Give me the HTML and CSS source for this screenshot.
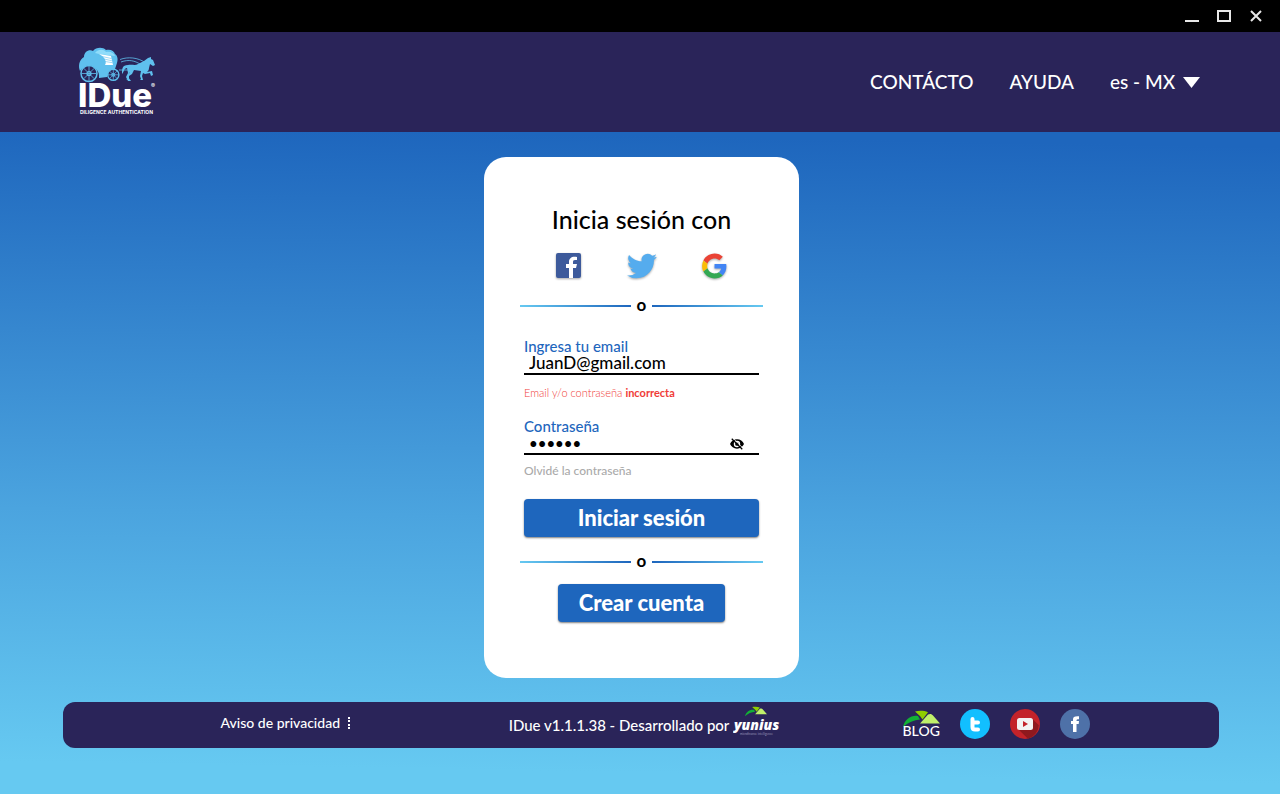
FILE: index.html
```html
<!DOCTYPE html>
<html lang="es-MX">
<head>
<meta charset="utf-8">
<meta name="viewport" content="width=device-width, initial-scale=1">
<title>IDue - Inicia sesión</title>
<link rel="stylesheet" href="styles.css">
</head>
<body>
<svg class="sprite" aria-hidden="true">
  <symbol id="leaves" viewBox="0 0 37 18">
    <path fill="#12b035" d="M0 17C2 9 8 5 15 6l2 3.500C11 10 5 12.500 0 17z"/>
    <path fill="#8fce00" d="M12 1.500C16 .500 21 .500 25 2.200L19.500 9.500 17 6z"/>
    <path fill="#c0f06a" d="M17 13.500 25 4.500c2-1 4-.500 5 1l7 8z"/>
  </symbol>
</svg>

<div class="titlebar">
  <button class="win" aria-label="Minimizar"><svg viewBox="0 0 16 16"><path d="M1 13h14"/></svg></button>
  <button class="win" aria-label="Maximizar"><svg viewBox="0 0 16 16"><path d="M2 3h12v10H2z"/></svg></button>
  <button class="win" aria-label="Cerrar"><svg viewBox="0 0 16 16"><path d="M3 3l10 10M13 3 3 13"/></svg></button>
</div>

<header class="header">
  <a class="logo" href="#" aria-label="IDue Diligence Authentication">
    <svg viewBox="0 0 80 70">
      <path fill="#5fc0ee" d="M2 24C0 19 1 13 6 10c0-5 5-8 9-6 3-4 10-4 13-1 5-1 8 1 9 4 3 2 3 6 2 9l-2 6c-4 0-7 3-8 8l-8 1c1-7-4-12-10-12-4 0-7 2-9 5z"/>
      <path fill="#8fdcfa" d="M17 6c3-4 9-4 11-1 4-1 8 1 9 4l-16-2z"/>
      <path fill="#fff" d="M21 7l12 2 2 9h-8c2-3 0-8-6-11z"/>
      <path fill="none" stroke="#5fc0ee" stroke-width=".6" d="M24 9.500l9.500 2M26 12l8 1.800M27 14.500l7.500 1.200"/>
      <g fill="none" stroke="#5fc0ee">
        <circle cx="11" cy="26.500" r="8" fill="#2a2459" stroke-width="1.500"/><circle cx="11" cy="26.500" r="2" stroke-width="1.200"/>
        <path stroke-width=".8" d="M11 19v15M3.500 26.500h15M5.700 21.200l10.600 10.600M16.300 21.200 5.700 31.800"/>
        <circle cx="35.300" cy="27.800" r="5.600" fill="#2a2459" stroke-width="1.400"/><circle cx="35.300" cy="27.800" r="1.500"/>
        <path stroke-width=".7" d="M35.300 22.500v11M30 27.800h11M31.500 24l7.600 7.600M39.100 24l-7.600 7.600"/>
        <path stroke-width=".8" d="M41 23h9M42 12.500c8-3 18-2 25 3M43 15c8-3 14-1 19 2"/>
      </g>
      <path fill="#5fc0ee" d="M66 14l4-3 3-1v2l2 1 2 5-2 1-3-2-1 4c0 2-1 3-2 4l5-1 1 4-2 1-1-3-5 1-2-1-1 3 1 4h-3l1-1-1-3 1-5-7-1-2 4-3 2v4h-3l2-1v-4l2-3-1 1-1 4 3 4h-3l-2-4 2-4-1-5c-3 0-3 4-5 6 0-5 0-9 6-9 4-1 7 1 10-1z"/>
      <text class="logo-name" x="0" y="60">IDue</text>
      <text class="logo-mark" x="73" y="41">®</text>
      <text class="logo-tag" x="2" y="67">DILIGENCE AUTHENTICATION</text>
    </svg>
  </a>
  <nav class="nav">
    <a href="#">CONTÁCTO</a>
    <a href="#">AYUDA</a>
    <div class="language">
      <select aria-label="Idioma"><option>es - MX</option></select>
      <svg viewBox="0 0 17 11" aria-hidden="true"><path d="M0 0h17L8.500 11z"/></svg>
    </div>
  </nav>
</header>

<main class="main">
  <form class="card">
    <h1 class="title">Inicia sesión con</h1>
    <div class="providers">
      <button type="button" aria-label="Facebook"><svg viewBox="0 0 30 30"><rect x="2" y="2" width="25" height="25" rx="2" fill="#3d5a9b"/><path fill="#fff" d="M15 27V17h-3v-4h3v-2c0-4 3-6 8-5v3c-3 0-4 0-4 2v2h4l-1 4h-3v10z"/></svg></button>
      <button type="button" aria-label="Twitter"><svg viewBox="0 0 24 24"><path fill="#55acee" d="M23.950 4.570a10 10 0 0 1-2.820.770 4.960 4.960 0 0 0 2.160-2.720c-.950.550-2 .950-3.130 1.180a4.920 4.920 0 0 0-8.380 4.480C7.690 8.090 4.070 6.130 1.640 3.160a4.920 4.920 0 0 0 1.520 6.570 4.900 4.900 0 0 1-2.230-.610v.060a4.920 4.920 0 0 0 3.950 4.830 5 5 0 0 1-2.210.080 4.940 4.940 0 0 0 4.600 3.420A9.870 9.870 0 0 1 0 19.540a14 14 0 0 0 7.550 2.210c9.050 0 14-7.500 14-13.980l-.020-.630a9.900 9.900 0 0 0 2.420-2.570z"/></svg></button>
      <button type="button" aria-label="Google"><svg viewBox="-6 -5 58 58"><path fill="#ea4335" d="M24 9.500c3.540 0 6.710 1.220 9.210 3.600l6.850-6.850C35.900 2.380 30.470 0 24 0 14.620 0 6.510 5.380 2.560 13.220l7.980 6.190C12.430 13.720 17.740 9.500 24 9.500z"/><path fill="#4285f4" d="M46.980 24.550c0-1.570-.150-3.090-.380-4.550H24v9.020h12.940c-.580 2.960-2.260 5.480-4.780 7.180l7.730 6c4.510-4.180 7.090-10.360 7.090-17.650z"/><path fill="#fbbc05" d="M10.530 28.590A14.500 14.500 0 0 1 9.770 24c0-1.600.270-3.140.760-4.590l-7.980-6.190A24 24 0 0 0 0 24c0 3.880.920 7.540 2.560 10.780z"/><path fill="#34a853" d="M24 48c6.480 0 11.930-2.130 15.890-5.810l-7.730-6c-2.150 1.450-4.920 2.300-8.160 2.300-6.260 0-11.570-4.220-13.470-9.910l-7.980 6.190C6.510 42.620 14.620 48 24 48z"/></svg></button>
    </div>

    <div class="divider"><span>o</span></div>

    <div class="field">
      <label for="email">Ingresa tu email</label>
      <div class="control"><input id="email" type="email" value="JuanD@gmail.com"></div>
      <p class="error">Email y/o contraseña <b>incorrecta</b></p>
    </div>
    <div class="field">
      <label for="password">Contraseña</label>
      <div class="control">
        <input id="password" type="password" value="abcdef">
        <button class="eye" type="button" aria-label="Mostrar contraseña"><svg viewBox="0 0 24 24"><path fill-rule="evenodd" d="M12 4C6.500 4 2 7.500 0 12c2 4.500 6.500 8 12 8s10-3.500 12-8c-2-4.500-6.500-8-12-8zm0 2.500a5.500 5.500 0 1 1 0 11 5.500 5.500 0 0 1 0-11z"/><circle cx="12" cy="12" r="3.200"/><path fill="none" stroke="#fff" stroke-width="1.500" d="M5 2l18 18"/><path fill="none" stroke="#000" stroke-width="2.200" d="M3 3l18 18"/></svg></button>
      </div>
      <a class="forgot" href="#">Olvidé la contraseña</a>
    </div>

    <button class="primary" type="submit">Iniciar sesión</button>
    <div class="divider"><span>o</span></div>
    <button class="primary secondary" type="button">Crear cuenta</button>
  </form>
</main>

<footer class="footer">
  <a class="privacy" href="#">Aviso de privacidad
    <svg viewBox="0 0 3 13" aria-hidden="true"><path d="M0 0h2v2H0zM0 3h2v2H0zM0 7h2v2H0zM0 10h2v2H0z"/></svg>
  </a>
  <div class="version">IDue v1.1.1.38 - Desarrollado por
    <svg class="yunius" viewBox="0 0 48 32">
      <use href="#leaves" x="12" y="0" width="22" height="11"/>
      <text class="yunius-name" x="1" y="24">yunius</text>
      <text class="yunius-tag" x="7" y="29">microfinance intelligence</text>
    </svg>
  </div>
  <div class="social">
    <a class="blog" href="#"><svg viewBox="0 0 37 18" aria-hidden="true"><use href="#leaves"/></svg><span>BLOG</span></a>
    <a href="#" aria-label="Twitter"><svg class="round" viewBox="0 0 30 30"><circle cx="15" cy="15" r="15" fill="#12bfff"/><path fill="none" stroke="#fff" stroke-width="4" stroke-linecap="round" stroke-linejoin="round" d="M12.500 10v8q0 2.500 2.500 2.500h3M13 13.500h5"/></svg></a>
    <a href="#" aria-label="YouTube"><svg class="round" viewBox="0 0 30 30"><circle cx="15" cy="15" r="15" fill="#c3232a"/><path fill="#8e191e" d="M22.500 10l6.300 6.300A15 15 0 0 1 18 29.700L8 20z"/><rect x="7" y="9" width="16" height="12" rx="2.500" fill="#f3f3f3"/><path fill="#c3232a" d="M13 12l5 3-5 3z"/></svg></a>
    <a href="#" aria-label="Facebook"><svg class="round" viewBox="0 0 30 30"><circle cx="15" cy="15" r="15" fill="#4e71a8"/><path fill="#fff" d="M13 23v-8h-2v-3h2v-1.500C13 8 14.500 7 19 7.300v2.900c-2 0-2.500.2-2.500 1.800h2.500l-.3 3h-2.200v8z"/></svg></a>
  </div>
</footer>
</body>
</html>
```
FILE: styles.css
```css
* { box-sizing: border-box; }

body {
  margin: 0;
  min-height: 100vh;
  display: flex;
  flex-direction: column;
  font-family: Lato, sans-serif;
  font-weight: 500;
  color: #000;
  background: linear-gradient(181deg, #1e66bd 18%, #4ba4df 65%, #66c9f1 96%);
}

a { color: inherit; text-decoration: none; }
button { padding: 0; border: 0; background: none; font: inherit; cursor: pointer; }
svg { display: block; }
.sprite { display: none; }

.titlebar {
  height: 32px;
  padding: 0 16px;
  display: flex;
  justify-content: flex-end;
  align-items: center;
  gap: 16px;
  background: #000;
}
.win svg { width: 16px; height: 16px; fill: none; stroke: #e8e8e8; stroke-width: 2; }

.header {
  height: 100px;
  padding: 0 80px 0 78px;
  display: flex;
  justify-content: space-between;
  align-items: center;
  background: #2a2459;
  color: #fff;
}
.logo svg { width: 80px; height: 70px; }
.logo text { fill: #fff; font-family: Inter, sans-serif; }
.logo .logo-name { font-size: 33px; font-weight: 800; }
.logo .logo-mark { font-size: 6px; font-weight: 700; }
.logo .logo-tag { font-size: 5px; font-weight: 700; }

.nav { display: flex; align-items: center; gap: 36px; font-size: 19px; line-height: 24px; }
.language { position: relative; }
.language select {
  display: block;
  appearance: none;
  border: 0;
  padding: 0 24px 0 0;
  background: none;
  color: inherit;
  font: inherit;
}
.language svg {
  position: absolute;
  top: 7px;
  right: 0;
  width: 17px;
  height: 11px;
  fill: #fff;
  pointer-events: none;
}

.main { flex: 1; display: flex; justify-content: center; align-items: flex-start; padding: 25px 16px 24px 19px; }
.card {
  width: 100%;
  max-width: 315px;
  padding: 44px 36px 56px;
  display: flex;
  flex-direction: column;
  border-radius: 22px;
  background: #fff;
}
.title { margin: 0; text-align: center; font-size: 25px; line-height: 36px; font-weight: 500; }
.providers { margin: 14px 34px 0; display: flex; justify-content: space-between; }
.providers svg { width: 30px; height: 30px; filter: drop-shadow(0 1px 1px rgba(0, 0, 0, .35)); }

.divider {
  margin-top: 15px;
  height: 20px;
  display: flex;
  align-items: center;
  gap: 6px;
  font-size: 17px;
  line-height: 20px;
  font-weight: 700;
}
.divider span { padding-bottom: 2px; }
.divider::before, .divider::after { content: ""; flex: 1; height: 2px; }
.divider::before { background: linear-gradient(90deg, #66c9f1, #1e66bd); }
.divider::after { background: linear-gradient(90deg, #1e66bd, #66c9f1); }

.field { margin: 14px 4px 0; display: flex; flex-direction: column; }
.divider + .field { margin-top: 21px; }
.field label { font-size: 15px; line-height: 18px; color: #1e66bd; }
.control { height: 20px; display: flex; align-items: center; border-bottom: 2px solid #000; }
.control input {
  flex: 1;
  min-width: 0;
  height: 18px;
  padding: 0 0 3px 5px;
  border: 0;
  outline: 0;
  background: none;
  font: inherit;
  font-size: 17px;
}
.control input[type="password"] { font-size: 15px; }
.eye { margin-right: 15px; }
.eye svg { width: 14px; height: 14px; }
.error { margin: 8px 0 0; font-size: 11px; line-height: 20px; color: #f03c38; font-weight: 300; }
.error b { font-weight: 700; }
.forgot { margin-top: 6px; font-size: 12px; line-height: 20px; color: #aaa; }

.primary {
  height: 38px;
  margin: 18px 4px 0;
  border-radius: 4px;
  background: #1e66bd;
  box-shadow: 0 1px 2px rgba(0, 0, 0, .5);
  color: #fff;
  font-size: 22px;
  line-height: 36px;
  font-weight: 900;
}
.secondary { align-self: center; margin-top: 12px; padding: 0 21px; }

.footer {
  height: 46px;
  margin: 0 61px 46px 63px;
  padding-left: 8px;
  display: grid;
  grid-template-columns: 1fr auto 1fr;
  align-items: center;
  justify-items: center;
  border-radius: 12px;
  background: #2a2459;
  color: #fff;
  font-size: 14px;
  line-height: 20px;
}
.privacy, .version, .social { display: flex; align-items: center; }
.privacy { gap: 8px; margin: 0 8px 4px 0; }
.privacy svg { width: 3px; height: 13px; fill: #fff; }
.version { gap: 4px; font-size: 15px; }
.yunius { width: 48px; height: 32px; margin-bottom: 6px; fill: #fff; }
.yunius-name { font: italic 800 14px "Open Sans", sans-serif; }
.yunius-tag { font-size: 3px; fill: #8f8bb0; }
.social { gap: 20px; margin: 0 8px 2px 0; }
.round { width: 30px; height: 30px; }
.blog { display: flex; flex-direction: column; align-items: center; line-height: 14px; }
.blog svg { width: 37px; height: 18px; }
.blog span { margin-top: -4px; }
```
